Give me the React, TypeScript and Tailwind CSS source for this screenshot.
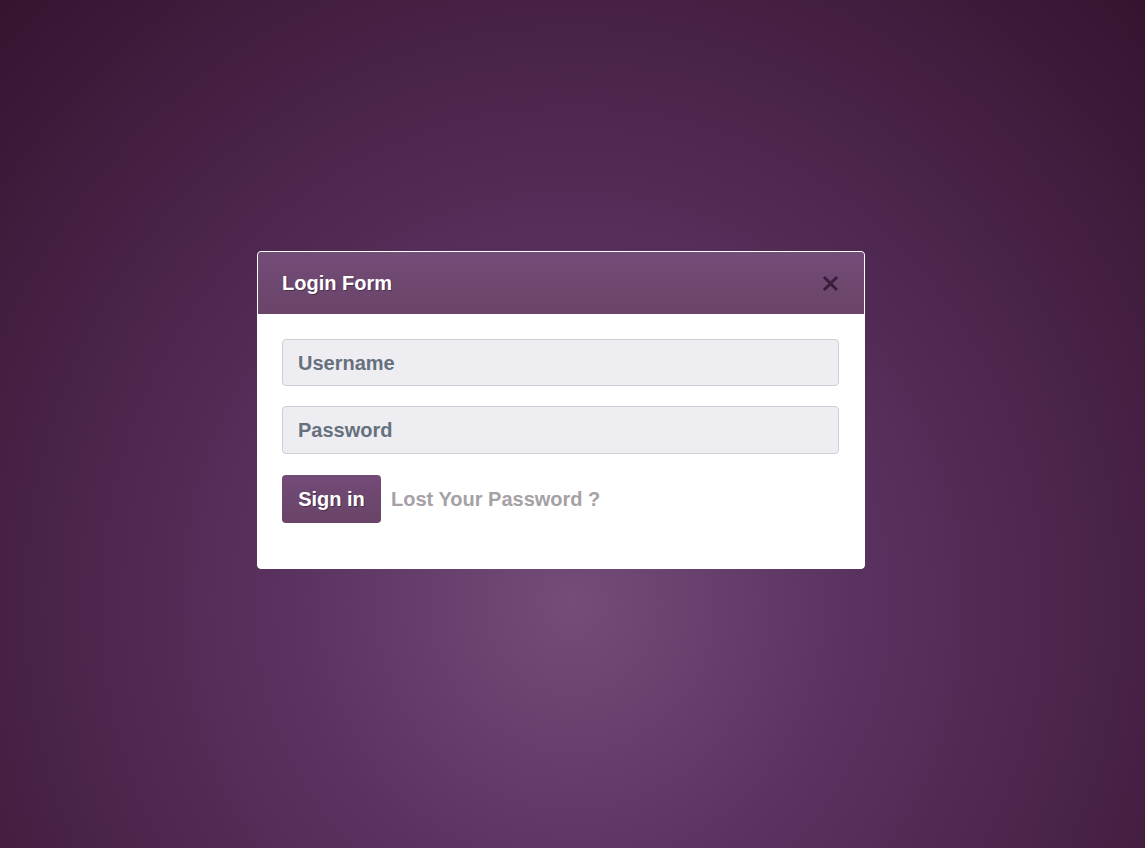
import React from "react";

export default function App() {
  return (
    <div
      className="w-full h-[848px] flex items-start justify-center pr-[23px] bg-[radial-gradient(ellipse_at_50%_71%,#744c78_0%,#5a3260_35%,#36132f_100%)]"
      style={{ fontFamily: '"Liberation Sans", Arial, sans-serif' }}
    >
      <div className="mt-[251px] w-[608px] rounded-[4px] border border-white bg-white overflow-hidden">
        <div className="h-[62px] flex items-center justify-between pl-[24px] pr-[25px] bg-[linear-gradient(to_bottom,#744c78,#6a4469)]">
          <span className="text-[20px] font-bold text-white [text-shadow:1px_1px_0_rgba(0,0,0,0.35)]">Login Form</span>
          <svg width="17" height="17" viewBox="0 0 17 17">
            <path d="M2 2 L15 15 M15 2 L2 15" stroke="#3a1c3c" strokeWidth="3" strokeLinecap="butt" />
          </svg>
        </div>
        <div className="pl-[24px] pr-[25px] pt-[25px] pb-[45px] flex flex-col">
          <div className="h-[47px] rounded-[4px] border border-[#cfcdd6] bg-[#eeedf2] flex items-center px-[15px]">
            <span className="text-[20px] font-bold text-[#66717d]">Username</span>
          </div>
          <div className="mt-[20px] h-[48px] rounded-[4px] border border-[#cfcdd6] bg-[#eeedf2] flex items-center px-[15px]">
            <span className="text-[20px] font-bold text-[#66717d]">Password</span>
          </div>
          <div className="mt-[21px] flex items-center gap-[10px]">
            <div className="h-[48px] w-[99px] rounded-[4px] bg-[linear-gradient(to_bottom,#734b77,#694368)] flex items-center justify-center">
              <span className="text-[20px] font-bold text-white [text-shadow:1px_1px_0_rgba(0,0,0,0.35)]">Sign in</span>
            </div>
            <span className="text-[20px] font-bold text-[#a6a1a6]">Lost Your Password ?</span>
          </div>
        </div>
      </div>
    </div>
  );
}
